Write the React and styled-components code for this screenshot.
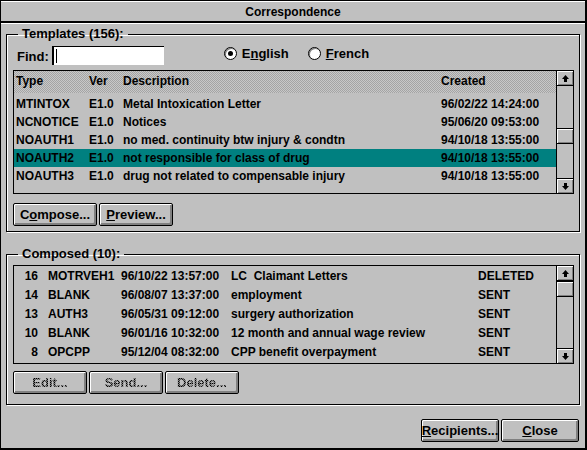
import React from "react";
import styled, { createGlobalStyle } from "styled-components";

const GlobalStyle = createGlobalStyle`
  html, body {
    margin: 0;
    padding: 0;
    background: #c0c0c0;
  }
  body {
    font-family: "Liberation Sans", Arial, sans-serif;
    font-size: 12px;
    font-weight: bold;
    color: #000;
  }
`;

const Window = styled.div`
  width: 587px;
  height: 450px;
  box-sizing: border-box;
  border: 1px solid #000;
  border-right-width: 2px;
  border-bottom-width: 2px;
  background: #c0c0c0;
  display: flex;
  flex-direction: column;
`;

const TitleBar = styled.div`
  height: 19px;
  border-top: 1px solid #fff;
  border-bottom: 2px solid #000;
  display: flex;
  align-items: center;
  justify-content: center;
  line-height: 14px;
`;

const Body = styled.div`
  flex: 1;
  display: flex;
  flex-direction: column;
  padding: 0 5px 0 5px;
  border-top: 1px solid #fff;
`;

const Group = styled.fieldset`
  margin: ${(p) => p.$top}px 0 0 0;
  padding: ${(p) => p.$padTop}px 5px ${(p) => p.$padBottom}px 6px;
  border: 1px solid #000;
  box-shadow: 1px 1px 0 #fff, inset 1px 1px 0 #fff;
  min-width: 0;
`;

const Legend = styled.legend`
  margin-left: 5px;
  padding: 0 4px;
  line-height: 14px;
  font-size: 13px;
`;

const FindRow = styled.div`
  height: 19px;
  display: flex;
  align-items: center;
  padding-left: 4px;
`;

const FindLabel = styled.span`
  font-size: 13px;
  margin-right: 3px;
  padding-top: 2px;
`;

const FindBox = styled.div`
  width: 108px;
  height: 18px;
  background: #fff;
  border-top: 1px solid #000;
  border-left: 2px solid #000;
  display: flex;
  align-items: center;
  padding-left: 2px;
`;

const Caret = styled.span`
  width: 1px;
  height: 14px;
  background: #000;
`;

const RadioGroup = styled.div`
  display: flex;
  gap: 19px;
  margin-left: 60px;
  margin-top: -5px;
`;

const RadioLabel = styled.label`
  display: flex;
  align-items: center;
  gap: 5px;
  font-size: 13px;
`;

const RadioCircle = styled.span`
  width: 13px;
  height: 13px;
  box-sizing: border-box;
  border-radius: 50%;
  border: 1px solid #000;
  background: #fff;
  box-shadow: inset 1px 1px 0 #808080;
  display: flex;
  align-items: center;
  justify-content: center;
  &::after {
    content: "";
    width: 5px;
    height: 5px;
    border-radius: 50%;
    background: ${(p) => (p.$checked ? "#000" : "transparent")};
  }
`;

const ListBox = styled.div`
  margin-top: ${(p) => p.$top}px;
  height: ${(p) => p.$height}px;
  box-sizing: border-box;
  border: 1px solid #000;
  display: flex;
`;

const ListContent = styled.div`
  flex: 1;
  min-width: 0;
  display: flex;
  flex-direction: column;
`;

const HeaderRow = styled.div`
  height: 22px;
  display: grid;
  grid-template-columns: ${(p) => p.$cols};
  align-items: center;
  padding-left: 2px;
  padding-bottom: 2px;
  box-sizing: border-box;
  background-color: #c0c0c0;
  background-image: repeating-conic-gradient(#a4a4a4 0 25%, #c8c8c8 0 50%);
  background-size: 2px 2px;
  margin-bottom: 2px;
`;

const Row = styled.div`
  height: ${(p) => p.$h}px;
  display: grid;
  grid-template-columns: ${(p) => p.$cols};
  align-items: center;
  padding-left: 2px;
  white-space: pre;
  background: ${(p) => (p.$selected ? "#008080" : "transparent")};
`;

const Num = styled.span`
  text-align: right;
  padding-right: 10px;
`;

const Scrollbar = styled.div`
  width: 16px;
  border-left: 1px solid #000;
  display: flex;
  flex-direction: column;
`;

const ScrollButton = styled.div`
  height: 15px;
  box-sizing: border-box;
  border-${(p) => (p.$down ? "top" : "bottom")}: 1px solid #000;
  box-shadow: inset 1px 1px 0 #fff, inset -1px -1px 0 #808080;
  display: flex;
  align-items: center;
  justify-content: center;
`;

const Track = styled.div`
  flex: 1;
  padding-top: ${(p) => p.$offset}px;
`;

const Thumb = styled.div`
  height: 16px;
  box-sizing: border-box;
  border-top: 1px solid #000;
  border-bottom: 1px solid #000;
  background: #c0c0c0;
  box-shadow: inset 1px 1px 0 #fff, inset -1px -1px 0 #808080;
`;

const ButtonRow = styled.div`
  display: flex;
  gap: 2px;
  margin-top: ${(p) => p.$top}px;
  justify-content: ${(p) => (p.$right ? "flex-end" : "flex-start")};
  padding-right: ${(p) => (p.$right ? 1 : 0)}px;
`;

const Button = styled.div`
  width: ${(p) => p.$w}px;
  height: 23px;
  box-sizing: border-box;
  border: 1px solid #000;
  border-radius: 2px;
  box-shadow: inset 1px 1px 0 #fff, inset -2px -2px 0 #808080;
  display: flex;
  align-items: center;
  justify-content: center;
  font-size: 13px;
  padding-bottom: 1px;
`;

const DisabledText = styled.span`
  color: transparent;
  background-image: repeating-conic-gradient(#000 0 25%, #7a7a7a 0 50%);
  background-size: 2px 2px;
  -webkit-background-clip: text;
  background-clip: text;
  font-weight: bold;
`;

const UpArrow = () => (
  <svg width="7" height="7" viewBox="0 0 7 7">
    <polygon points="3.5,0 7,4 0,4" fill="#000" />
    <rect x="2" y="4" width="3" height="3" fill="#000" />
  </svg>
);

const DownArrow = () => (
  <svg width="7" height="7" viewBox="0 0 7 7">
    <rect x="2" y="0" width="3" height="3" fill="#000" />
    <polygon points="0,3 7,3 3.5,7" fill="#000" />
  </svg>
);

const templates = [
  ["MTINTOX", "E1.0", "Metal Intoxication Letter", "96/02/22 14:24:00"],
  ["NCNOTICE", "E1.0", "Notices", "95/06/20 09:53:00"],
  ["NOAUTH1", "E1.0", "no med. continuity btw injury & condtn", "94/10/18 13:55:00"],
  ["NOAUTH2", "E1.0", "not responsible for class of drug", "94/10/18 13:55:00"],
  ["NOAUTH3", "E1.0", "drug not related to compensable injury", "94/10/18 13:55:00"],
];

const composed = [
  [16, "MOTRVEH1", "96/10/22 13:57:00", "LC  Claimant Letters", "DELETED"],
  [14, "BLANK", "96/08/07 13:37:00", "employment", "SENT"],
  [13, "AUTH3", "96/05/31 09:12:00", "surgery authorization", "SENT"],
  [10, "BLANK", "96/01/16 10:32:00", "12 month and annual wage review", "SENT"],
  [8, "OPCPP", "95/12/04 08:32:00", "CPP benefit overpayment", "SENT"],
];

const templateCols = "73px 34px 318px 1fr";
const composedCols = "32px 73px 110px 247px 1fr";

const ScrollBar = ({ thumbOffset }) => (
  <Scrollbar>
    <ScrollButton>
      <UpArrow />
    </ScrollButton>
    <Track $offset={thumbOffset}>
      <Thumb />
    </Track>
    <ScrollButton $down>
      <DownArrow />
    </ScrollButton>
  </Scrollbar>
);

export default function App() {
  return (
    <>
      <GlobalStyle />
      <Window>
        <TitleBar>Correspondence</TitleBar>
        <Body>
          <Group $top={3} $padTop={5} $padBottom={5}>
            <Legend>Templates (156):</Legend>
            <FindRow>
              <FindLabel>Find:</FindLabel>
              <FindBox>
                <Caret />
              </FindBox>
              <RadioGroup>
                <RadioLabel>
                  <RadioCircle $checked />
                  <span>
                    E<u>n</u>glish
                  </span>
                </RadioLabel>
                <RadioLabel>
                  <RadioCircle />
                  <span>
                    <u>F</u>rench
                  </span>
                </RadioLabel>
              </RadioGroup>
            </FindRow>
            <ListBox $top={5} $height={124}>
              <ListContent>
                <HeaderRow $cols={templateCols}>
                  <span>Type</span>
                  <span>Ver</span>
                  <span>Description</span>
                  <span>Created</span>
                </HeaderRow>
                {templates.map((t, i) => (
                  <Row key={t[0]} $h={18} $cols={templateCols} $selected={i === 3}>
                    <span>{t[0]}</span>
                    <span>{t[1]}</span>
                    <span>{t[2]}</span>
                    <span>{t[3]}</span>
                  </Row>
                ))}
              </ListContent>
              <ScrollBar thumbOffset={42} />
            </ListBox>
            <ButtonRow $top={9}>
              <Button $w={84}>
                <span>
                  C<u>o</u>mpose...
                </span>
              </Button>
              <Button $w={74}>
                <span>
                  <u>P</u>review...
                </span>
              </Button>
            </ButtonRow>
          </Group>

          <Group $top={15} $padTop={4} $padBottom={10}>
            <Legend>Composed (10):</Legend>
            <ListBox $top={0} $height={99}>
              <ListContent>
                {composed.map((c) => (
                  <Row key={c[0]} $h={19} $cols={composedCols}>
                    <Num>{c[0]}</Num>
                    <span>{c[1]}</span>
                    <span>{c[2]}</span>
                    <span>{c[3]}</span>
                    <span>{c[4]}</span>
                  </Row>
                ))}
              </ListContent>
              <ScrollBar thumbOffset={0} />
            </ListBox>
            <ButtonRow $top={7}>
              <Button $w={74}>
                <DisabledText>Edit...</DisabledText>
              </Button>
              <Button $w={74}>
                <DisabledText>Send...</DisabledText>
              </Button>
              <Button $w={74}>
                <DisabledText>Delete...</DisabledText>
              </Button>
            </ButtonRow>
          </Group>

          <ButtonRow $top={14} $right>
            <Button $w={78}>
              <span>
                <u>R</u>ecipients...
              </span>
            </Button>
            <Button $w={78}>
              <span>
                <u>C</u>lose
              </span>
            </Button>
          </ButtonRow>
        </Body>
      </Window>
    </>
  );
}
